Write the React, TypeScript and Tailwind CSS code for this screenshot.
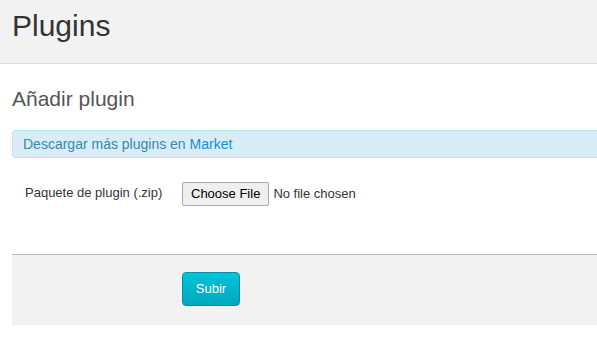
const App: React.FC = () => {
  return (
    <div className="min-h-[356px] bg-white text-[#333]" style={{ fontFamily: "'Liberation Sans', Arial, sans-serif" }}>
      {/* Page header */}
      <div className="h-[64px] bg-[#f2f2f2] border-b border-[#dcdcdc] px-3 pt-[8px]">
        <h1 className="text-[30px] leading-[36px] text-[#333]">Plugins</h1>
      </div>

      <div className="pl-3">
        <h2 className="mt-[23px] text-[21px] leading-[24px] text-[#555]">Añadir plugin</h2>

        {/* Info bar */}
        <div className="mt-[19px] h-[28px] bg-[#d9edf7] border border-r-0 border-[#bce8f1] rounded-l-[4px] pl-[10px] flex items-center text-[14px] text-[#3a87ad]">
          <span>Descargar más plugins en&nbsp;</span>
          <a href="#" className="text-[#168ed8]">Market</a>
        </div>

        {/* Form row */}
        <div className="mt-[25px] flex items-center h-[22px]">
          <label className="w-[170px] pl-[13px] text-[13px] text-[#333] -mt-[2px]">Paquete de plugin (.zip)</label>
          <input type="file" className="text-[13px] text-[#333] file:mr-[4px] file:px-[8px] file:py-[1px] file:border file:border-[#a9a9a9] file:rounded-[2px] file:bg-[#efefef] file:text-black" />
        </div>

        {/* Footer actions */}
        <div className="mt-[49px] border-t border-[#bbb] bg-[#f2f2f2] h-[71px] pl-[170px] pt-[17px]">
          <button className="w-[58px] h-[34px] rounded-[4px] border border-[#0a8f9c] bg-gradient-to-b from-[#00c3da] to-[#00a9bd] text-white text-[13px]">
            Subir
          </button>
        </div>
      </div>
    </div>
  );
};

export default App;
